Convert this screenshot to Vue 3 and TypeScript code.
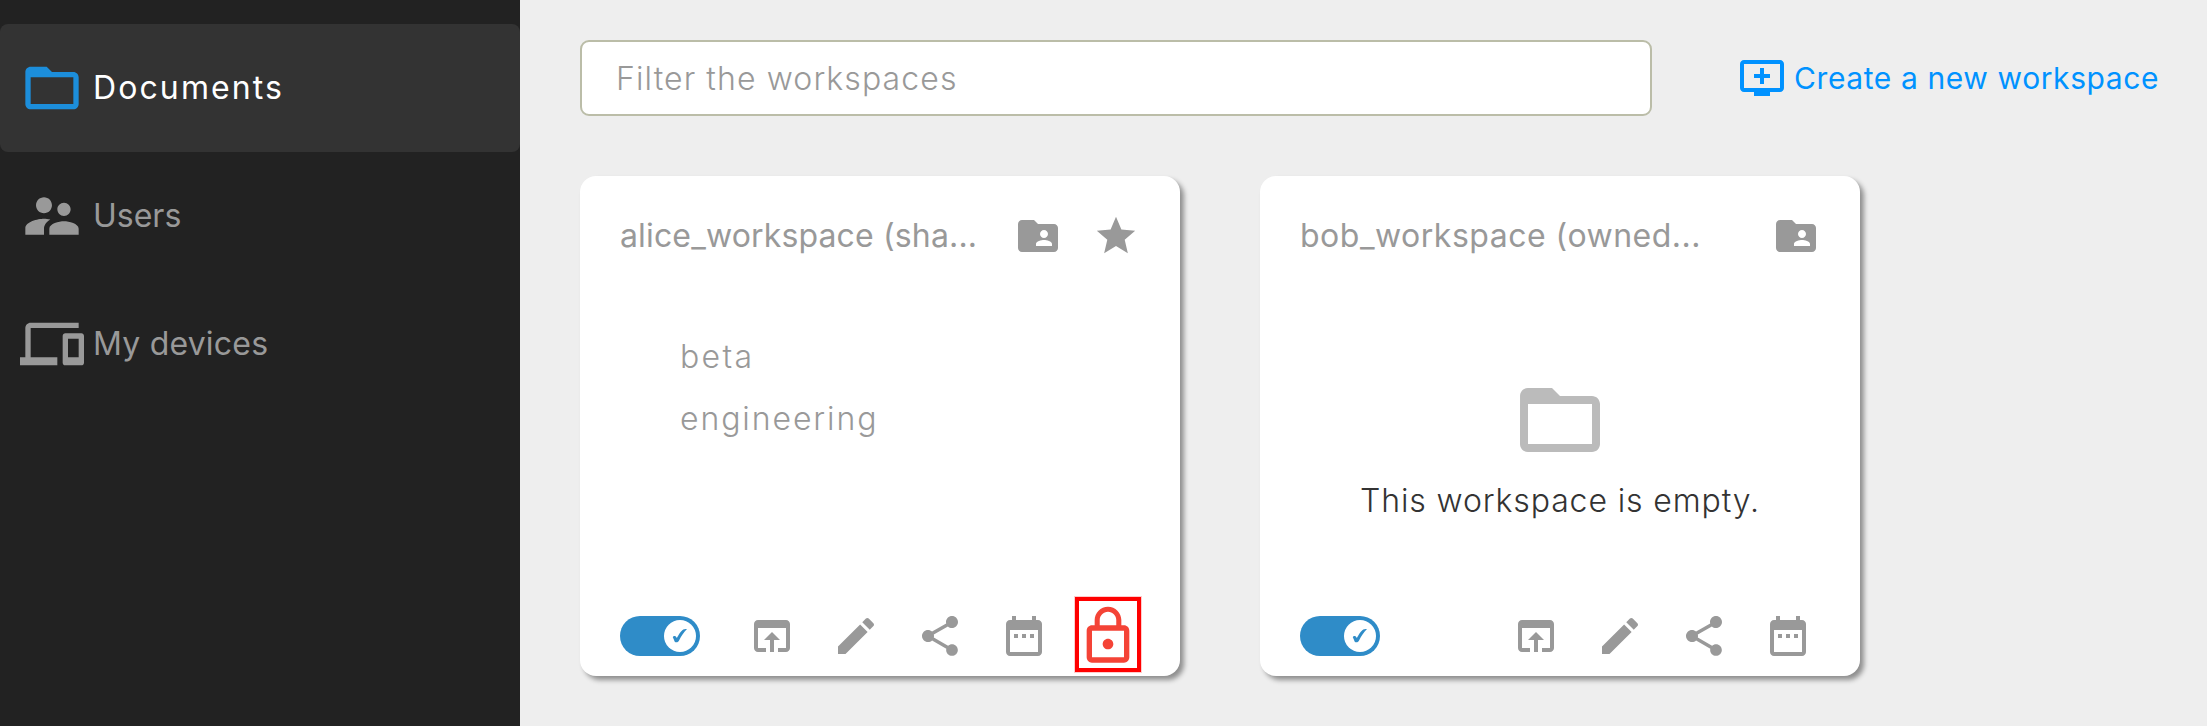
<script setup lang="ts">
interface NavItem { label: string; icon: string; cls: string; active?: boolean }
interface Workspace { name: string; cls: string; starred: boolean; entries: string[]; locked: boolean }

const icons: Record<string, string> = {
  folder: 'M20 6h-8l-2-2H4c-1.1 0-1.99.9-1.99 2L2 18c0 1.1.9 2 2 2h16c1.1 0 2-.9 2-2V8c0-1.1-.9-2-2-2zm0 12H4V8h16v10z',
  users: 'M16.5 12c1.38 0 2.49-1.12 2.49-2.5S17.88 7 16.5 7 14 8.12 14 9.5s1.12 2.5 2.5 2.5zM9 11c1.66 0 2.99-1.34 2.99-3S10.66 5 9 5 6 6.34 6 8s1.34 3 3 3zm7.5 3c-1.83 0-5.5.92-5.5 2.75V19h11v-2.25c0-1.83-3.67-2.75-5.5-2.75zM9 13c-2.33 0-7 1.17-7 3.5V19h7v-2.25c0-.85.33-2.34 2.37-3.47C10.5 13.1 9.66 13 9 13z',
  devices: 'M4 6h18V4H4c-1.1 0-2 .9-2 2v11H0v3h14v-3H4V6zm19 2h-6c-.55 0-1 .45-1 1v10c0 .55.45 1 1 1h6c.55 0 1-.45 1-1V9c0-.55-.45-1-1-1zm-1 9h-4v-7h4v7z',
  queue: 'M21 3H3c-1.11 0-2 .89-2 2v12c0 1.1.89 2 2 2h5v2h8v-2h5c1.1 0 1.99-.9 1.99-2L23 5c0-1.11-.9-2-2-2zm0 14H3V5h18v12zm-5-7v2h-3v3h-2v-3H8v-2h3V7h2v3h3z',
  shared: 'M20 6h-8l-2-2H4c-1.1 0-1.99.9-1.99 2L2 18c0 1.1.9 2 2 2h16c1.1 0 2-.9 2-2V8c0-1.1-.9-2-2-2zm-5 3c1.1 0 2 .9 2 2s-.9 2-2 2-2-.9-2-2 .9-2 2-2zm4 8h-8v-1c0-1.33 2.67-2 4-2s4 .67 4 2v1z',
  star: 'M12 17.27L18.18 21l-1.64-7.03L22 9.24l-7.19-.61L12 2 9.19 8.63 2 9.24l5.46 4.73L5.82 21z',
  lock: 'M12 17c1.1 0 2-.9 2-2s-.9-2-2-2-2 .9-2 2 .9 2 2 2zm6-9h-1V6c0-2.76-2.24-5-5-5S7 3.24 7 6v2H6c-1.1 0-2 .9-2 2v10c0 1.1.9 2 2 2h12c1.1 0 2-.9 2-2V10c0-1.1-.9-2-2-2zM8.9 6c0-1.71 1.39-3.1 3.1-3.1s3.1 1.39 3.1 3.1v2H8.9V6zM18 20H6V10h12v10z',
}

// Footer actions: open, rename, share, history
const actions: string[] = [
  'M19 4H5c-1.11 0-2 .9-2 2v12c0 1.1.89 2 2 2h4v-2H5V8h14v10h-4v2h4c1.1 0 2-.9 2-2V6c0-1.1-.89-2-2-2zm-7 6l-4 4h3v6h2v-6h3l-4-4z',
  'M3 17.25V21h3.75L17.81 9.94l-3.75-3.75L3 17.25zM20.71 7.04c.39-.39.39-1.02 0-1.41l-2.34-2.34c-.39-.39-1.02-.39-1.41 0l-1.83 1.83 3.75 3.75 1.83-1.83z',
  'M18 16.08c-.76 0-1.44.3-1.96.77L8.91 12.7c.05-.23.09-.46.09-.7s-.04-.47-.09-.7l7.05-4.11c.54.5 1.25.81 2.04.81 1.66 0 3-1.34 3-3s-1.34-3-3-3-3 1.34-3 3c0 .24.04.47.09.7L8.04 9.81C7.5 9.31 6.79 9 6 9c-1.66 0-3 1.34-3 3s1.34 3 3 3c.79 0 1.5-.31 2.04-.81l7.12 4.16c-.05.21-.08.43-.08.65 0 1.61 1.31 2.92 2.92 2.92 1.61 0 2.92-1.31 2.92-2.92s-1.31-2.92-2.92-2.92z',
  'M9 11H7v2h2v-2zm4 0h-2v2h2v-2zm4 0h-2v2h2v-2zm2-7h-1V2h-2v2H8V2H6v2H5c-1.11 0-1.99.9-1.99 2L3 20c0 1.1.89 2 2 2h14c1.1 0 2-.9 2-2V6c0-1.1-.9-2-2-2zm0 16H5V9h14v11z',
]

const nav: NavItem[] = [
  { label: 'Documents', icon: 'folder', cls: 'documents', active: true },
  { label: 'Users', icon: 'users', cls: 'users' },
  { label: 'My devices', icon: 'devices', cls: 'devices' },
]

const workspaces: Workspace[] = [
  { name: 'alice_workspace (sha...', cls: 'alice', starred: true, entries: ['beta', 'engineering'], locked: true },
  { name: 'bob_workspace (owned...', cls: 'bob', starred: false, entries: [], locked: false },
]
</script>

<template>
  <div class="app">
    <aside class="sidebar">
      <a v-for="item in nav" :key="item.label" class="nav-item" :class="[item.cls, { active: item.active }]">
        <svg class="nav-icon" viewBox="0 0 24 24"><path :d="icons[item.icon]" /></svg>
        <span>{{ item.label }}</span>
      </a>
    </aside>

    <main class="content">
      <header class="toolbar">
        <input class="filter" type="text" placeholder="Filter the workspaces" />
        <a class="create">
          <svg class="icon" viewBox="0 0 24 24"><path :d="icons.queue" /></svg>
          <span>Create a new workspace</span>
        </a>
      </header>

      <section class="cards">
        <article v-for="ws in workspaces" :key="ws.name" class="card">
          <div class="card-head">
            <span class="card-title" :class="ws.cls">{{ ws.name }}</span>
            <svg class="icon" viewBox="0 0 24 24"><path :d="icons.shared" /></svg>
            <svg v-if="ws.starred" class="icon star" viewBox="0 0 24 24"><path :d="icons.star" /></svg>
          </div>

          <ul v-if="ws.entries.length" class="entries">
            <li v-for="entry in ws.entries" :key="entry" :class="entry">{{ entry }}</li>
          </ul>
          <div v-else class="empty">
            <svg class="empty-icon" viewBox="0 0 24 24"><path :d="icons.folder" /></svg>
            <span>This workspace is empty.</span>
          </div>

          <div class="card-foot" :class="{ locked: ws.locked }">
            <div class="toggle">
              <span class="knob">
                <svg class="check" viewBox="0 0 16 16"><path d="M.8 9.2C1.2 8.2 2.4 7.6 3.5 8.3C4.1 8.7 4.4 9.3 4.8 10C6.6 6.8 8.3 4 10.3 2.2C11.6 1.2 13 1 15 1C11.8 4.2 9.4 7.8 7.2 12.2C6.4 13.8 5.8 14.2 4.4 14.2C3 14.2 2.8 13.9 2.3 12.7C1.8 11.4 1.5 10.2.8 9.2Z" /></svg>
              </span>
            </div>
            <svg v-for="path in actions" :key="path" class="icon action" viewBox="0 0 24 24"><path :d="path" /></svg>
            <span v-if="ws.locked" class="lock-frame">
              <svg class="lock" viewBox="0 0 24 24"><path :d="icons.lock" /></svg>
            </span>
          </div>
        </article>
      </section>
    </main>
  </div>
</template>

<style>
body {
  margin: 0;
  background: #eee;
}
</style>

<style scoped>
.app {
  display: flex;
  height: 726px;
  overflow: hidden;
  background: #eee;
  color: #999;
  font-family: Inter, "Liberation Sans", sans-serif;
  font-size: 32px;
  line-height: 40px;
}

.app span,
.app li {
  white-space: nowrap;
}

svg {
  display: block;
  flex: none;
  fill: currentColor;
}

.sidebar {
  flex: none;
  box-sizing: border-box;
  width: 520px;
  padding-top: 24px;
  background: #222;
}

.nav-item {
  display: flex;
  align-items: center;
  box-sizing: border-box;
  height: 128px;
  padding-left: 20px;
  gap: 9px;
  border-radius: 8px;
}

.nav-item.active {
  background: #333;
  color: #fff;
}

.nav-item.active .nav-icon {
  color: #1c8edb;
}

.nav-icon {
  width: 64px;
  height: 64px;
}

.documents { letter-spacing: 2.1px; }
.users { letter-spacing: 0; }
.devices { letter-spacing: 0.2px; }

.content {
  flex: 1;
  padding: 40px 0 0 60px;
}

.toolbar {
  display: flex;
  align-items: center;
  height: 76px;
}

.filter {
  box-sizing: border-box;
  width: 1072px;
  height: 76px;
  padding: 0 34px;
  border: 2px solid #bbbda8;
  border-radius: 9px;
  background: #fff;
  font: 300 32px Inter, "Liberation Sans", sans-serif;
  letter-spacing: 1.1px;
}

.filter::placeholder {
  color: #999;
  opacity: 1;
}

.create {
  display: flex;
  align-items: center;
  gap: 8px;
  margin-left: 86px;
  color: #0092ff;
  font-size: 30px;
  letter-spacing: 0.6px;
}

.icon {
  width: 48px;
  height: 48px;
}

.cards {
  display: flex;
  gap: 80px;
  margin-top: 60px;
}

.card {
  display: flex;
  flex-direction: column;
  box-sizing: border-box;
  width: 600px;
  height: 500px;
  padding: 36px 40px 8px;
  border-radius: 16px;
  background: #fff;
  box-shadow: 4px 4px 5px rgba(0, 0, 0, 0.4);
}

.card-head {
  display: flex;
  align-items: center;
  height: 48px;
}

.card-title {
  flex: 1;
}

.card-title.alice { letter-spacing: 0.15px; }
.card-title.bob { letter-spacing: 0.5px; }

.star {
  width: 46px;
  height: 46px;
  margin: 0 1px 0 31px;
}

.entries {
  flex: 1;
  margin: 66px 0 0 60px;
  padding: 0;
  list-style: none;
  font-weight: 300;
  line-height: 62px;
}

.entries .beta { letter-spacing: 2.3px; }
.entries .engineering { letter-spacing: 1.9px; }

.empty {
  flex: 1;
  display: flex;
  flex-direction: column;
  align-items: center;
  padding-top: 112px;
  color: #333;
  font-weight: 300;
  letter-spacing: 0.88px;
}

.empty-icon {
  width: 96px;
  height: 96px;
  margin-bottom: 13px;
  color: #bbb;
}

.card-foot {
  display: flex;
  align-items: center;
  gap: 36px;
  height: 64px;
  padding-right: 8px;
}

.card-foot.locked {
  padding-right: 0;
}

.toggle {
  display: flex;
  justify-content: flex-end;
  box-sizing: border-box;
  width: 80px;
  height: 40px;
  margin-right: auto;
  padding: 4px;
  border-radius: 20px;
  background: #2f8cc8;
}

.knob {
  display: flex;
  align-items: center;
  justify-content: center;
  width: 32px;
  height: 32px;
  border-radius: 50%;
  background: #fff;
}

.check {
  width: 16px;
  height: 16px;
  color: #2f8cc8;
}

.lock-frame {
  display: flex;
  align-items: center;
  justify-content: center;
  box-sizing: border-box;
  width: 66px;
  height: 75px;
  margin: 0 -1px 3px -9px;
  padding-top: 3px;
  border: 4px solid #f00;
  outline: 1px solid rgba(255, 0, 0, 0.2);
  color: #f44336;
}

.lock {
  width: 64px;
  height: 64px;
}
</style>
